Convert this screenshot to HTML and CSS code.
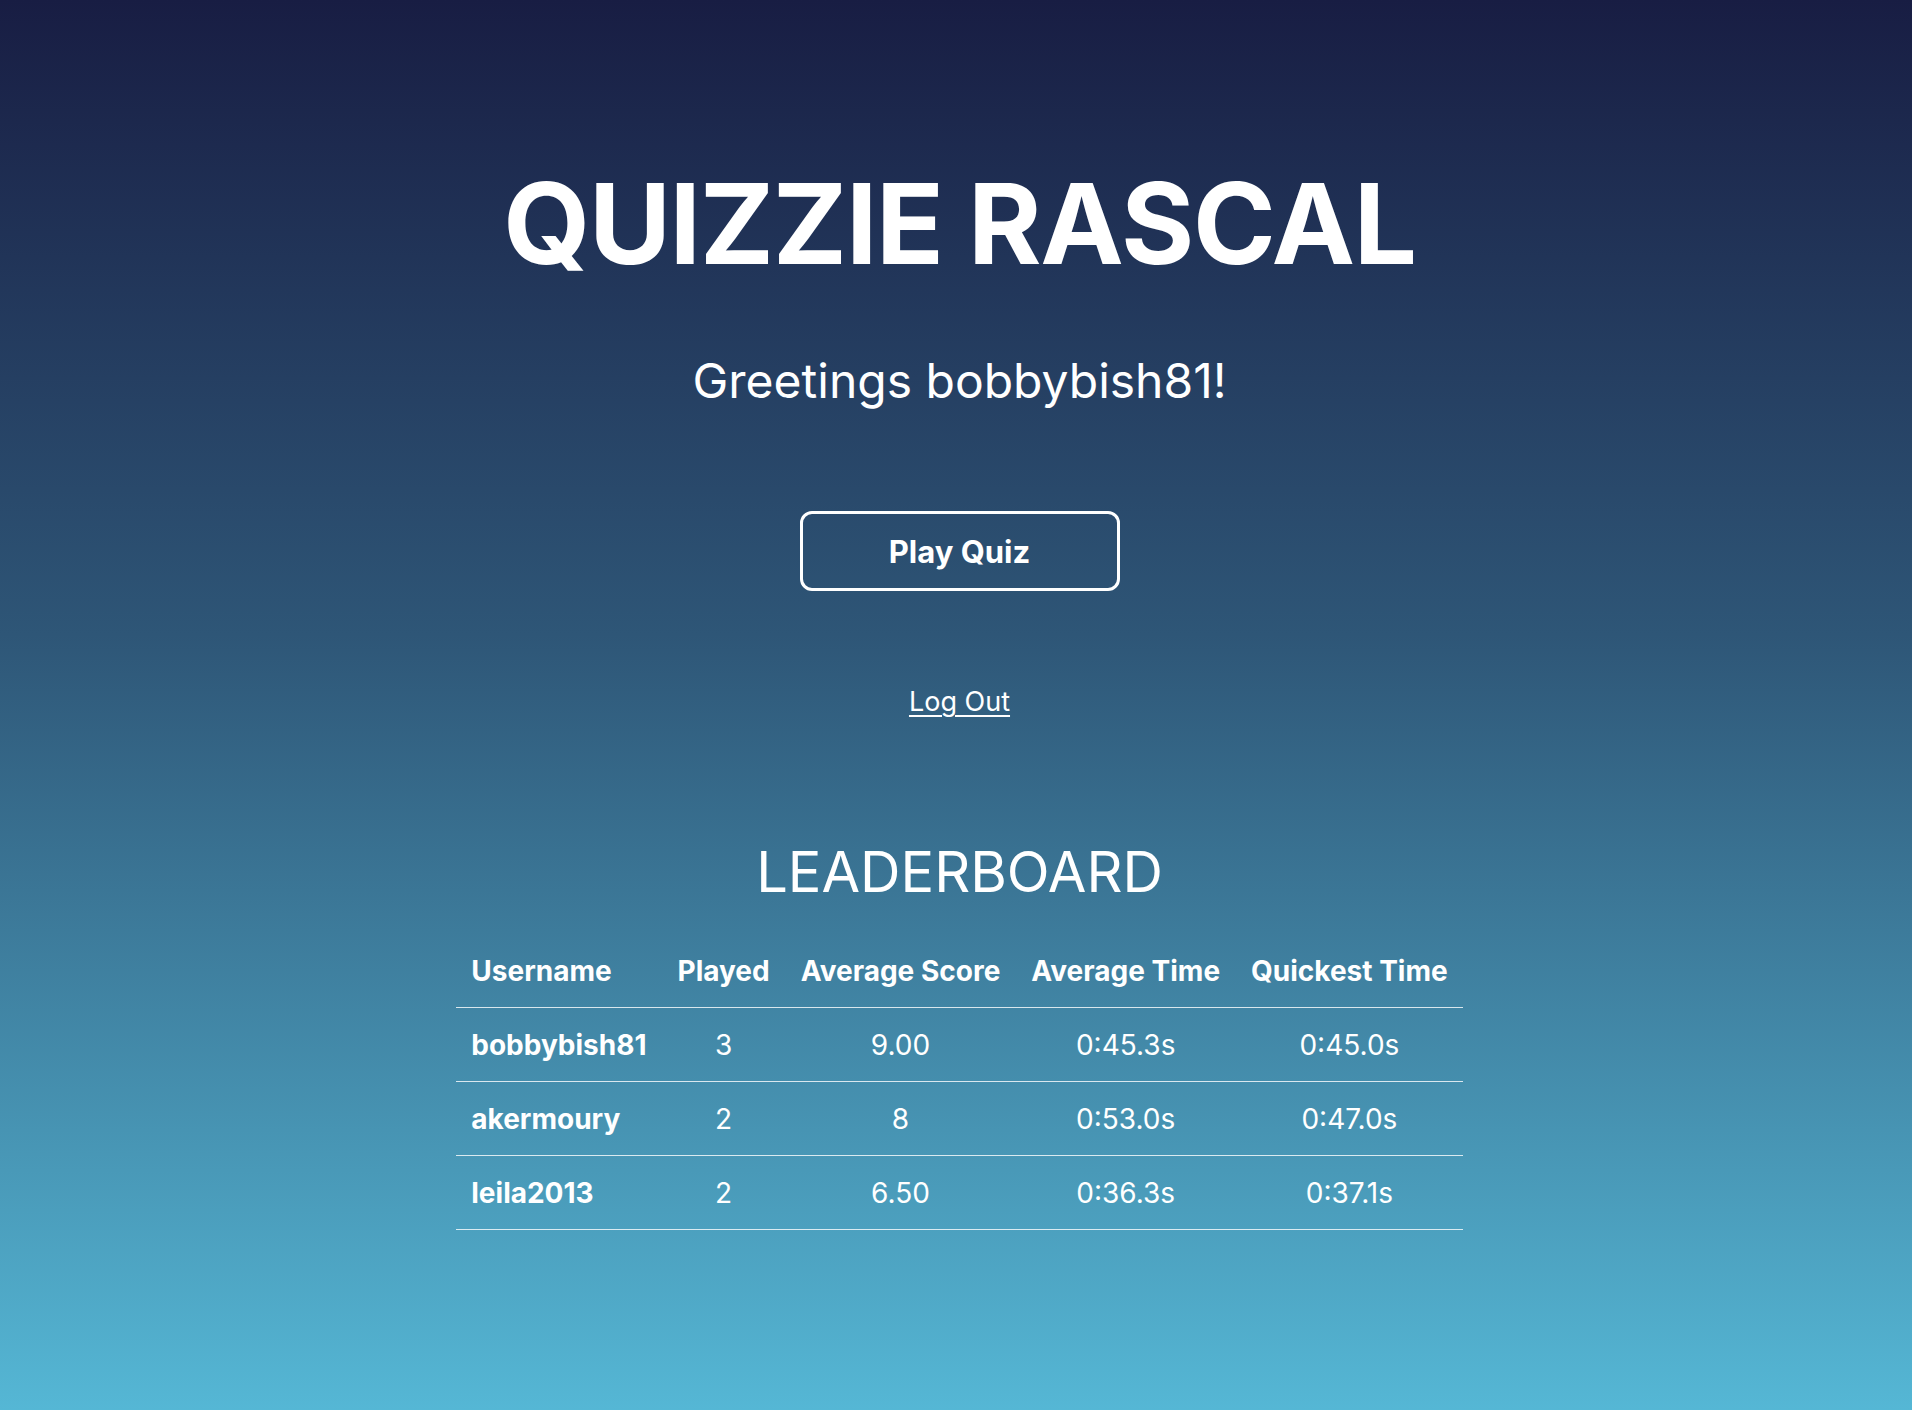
FILE: index.html
```html
<!DOCTYPE html>
<html lang="en">
<head>
<meta charset="utf-8">
<title>Quizzie Rascal</title>
<link rel="stylesheet" href="styles.css">
</head>
<body>
<main class="page">
  <h1 class="title">QUIZZIE RASCAL</h1>
  <p class="greeting">Greetings bobbybish81!</p>
  <button class="play-btn" type="button">Play Quiz</button>
  <a class="logout" href="#">Log Out</a>
  <h2 class="board-title">LEADERBOARD</h2>
  <table class="board">
    <thead>
      <tr>
        <th class="name">Username</th>
        <th>Played</th>
        <th>Average Score</th>
        <th>Average Time</th>
        <th>Quickest Time</th>
      </tr>
    </thead>
    <tbody>
      <tr>
        <td class="name">bobbybish81</td>
        <td>3</td>
        <td>9.00</td>
        <td>0:45.3s</td>
        <td>0:45.0s</td>
      </tr>
      <tr>
        <td class="name">akermoury</td>
        <td>2</td>
        <td>8</td>
        <td>0:53.0s</td>
        <td>0:47.0s</td>
      </tr>
      <tr>
        <td class="name">leila2013</td>
        <td>2</td>
        <td>6.50</td>
        <td>0:36.3s</td>
        <td>0:37.1s</td>
      </tr>
    </tbody>
  </table>
</main>
</body>
</html>
```

FILE: styles.css
```css
html, body {
  margin: 0;
  padding: 0;
}

body {
  min-height: 100vh;
  background: linear-gradient(180deg, #181d43 0%, #2e5677 45%, #55b7d5 100%);
  color: #ffffff;
  font-family: Inter, "Noto Sans", sans-serif;
}

.page {
  display: flex;
  flex-direction: column;
  align-items: center;
  padding-top: 167px;
  padding-left: 7px;
}

.title {
  margin: 0;
  font-size: 112px;
  line-height: 1;
  font-weight: 700;
  letter-spacing: -1.3px;
}

.greeting {
  margin: 78px 0 0;
  font-size: 48px;
  line-height: 1;
  font-weight: 400;
}

.play-btn {
  margin-top: 106px;
  width: 320px;
  height: 80px;
  background: transparent;
  border: 3px solid #ffffff;
  border-radius: 12px;
  color: #ffffff;
  font-family: Inter, "Noto Sans", sans-serif;
  font-size: 31px;
  font-weight: 700;
  line-height: 1;
  cursor: pointer;
}

.logout {
  margin-top: 97px;
  font-size: 27px;
  line-height: 1;
  color: #ffffff;
  text-decoration: underline;
  text-underline-offset: 4px;
  text-decoration-thickness: 2px;
}

.board-title {
  margin: 129px 0 0;
  font-size: 56px;
  line-height: 1;
  font-weight: 400;
}

.board {
  margin-top: 34px;
  border-collapse: collapse;
  font-size: 28px;
  line-height: 34px;
}

.board th,
.board td {
  padding: 20px 15.5px 19px;
  text-align: center;
  border-bottom: 1px solid rgba(255, 255, 255, 0.8);
  white-space: nowrap;
}

.board th {
  font-weight: 700;
}

.board td {
  font-weight: 400;
}

.board .name {
  text-align: left;
  font-weight: 700;
}
```
